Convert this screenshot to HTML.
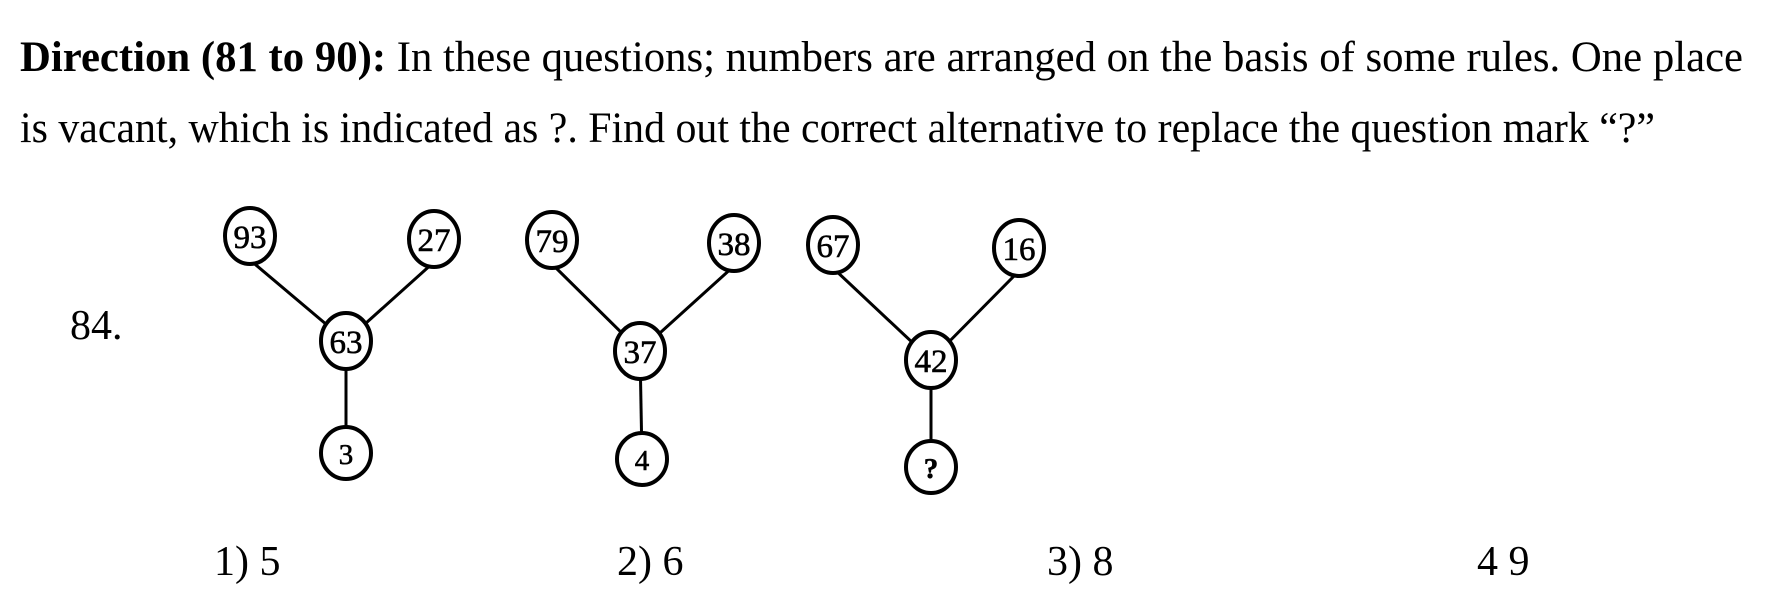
<!DOCTYPE html>
<html><head><meta charset="utf-8"><style>
body{margin:0;width:1766px;height:604px;background:#fff;position:relative;overflow:hidden;font-family:"Liberation Serif",serif;color:#000}
.l{position:absolute;left:20px;font-size:43px;line-height:1;white-space:nowrap;transform-origin:0 0}
.t{position:absolute;font-size:42px;line-height:1;white-space:nowrap}
svg{position:absolute;left:0;top:0}
</style></head><body>
<div class="l" id="l1" data-w="1723" style="top:36px"><b>Direction (81 to 90):</b> In these questions; numbers are arranged on the basis of some rules. One place</div>
<div class="l" id="l2" data-w="1635" style="top:107px">is vacant, which is indicated as ?. Find out the correct alternative to replace the question mark “?”</div>
<div class="t" style="left:70px;top:305px">84.</div>
<svg width="1766" height="604" font-family="Liberation Serif, serif" font-size="33" text-anchor="middle">
<g stroke="#000" stroke-width="3" fill="none">
<line x1="250" y1="260" x2="346" y2="341"/><line x1="434" y1="262" x2="346" y2="341"/><line x1="346" y1="341" x2="346" y2="453"/>
<line x1="552" y1="264" x2="640" y2="351"/><line x1="734" y1="266" x2="640" y2="351"/><line x1="640" y1="351" x2="642" y2="459"/>
<line x1="833" y1="268" x2="931" y2="360"/><line x1="1019" y1="271" x2="931" y2="360"/><line x1="931" y1="360" x2="931" y2="467"/>
</g>
<g stroke="#000" stroke-width="4" fill="#fff">
<ellipse cx="250" cy="236" rx="25" ry="28"/><ellipse cx="434" cy="239" rx="25" ry="28"/><ellipse cx="346" cy="341" rx="25" ry="28"/><ellipse cx="346" cy="453" rx="25" ry="26"/>
<ellipse cx="552" cy="240" rx="25" ry="28"/><ellipse cx="734" cy="243" rx="25" ry="28"/><ellipse cx="640" cy="351" rx="25" ry="28"/><ellipse cx="642" cy="459" rx="25" ry="26"/>
<ellipse cx="833" cy="245" rx="25" ry="28"/><ellipse cx="1019" cy="248" rx="25" ry="28"/><ellipse cx="931" cy="360" rx="25" ry="28"/><ellipse cx="931" cy="467" rx="25" ry="26"/>
</g>
<g fill="#000" stroke="#000" stroke-width="0.6">
<text x="250" y="248">93</text><text x="434" y="251">27</text><text x="346" y="353">63</text><text x="346" y="464" font-size="29">3</text>
<text x="552" y="252">79</text><text x="734" y="255">38</text><text x="640" y="363">37</text><text x="642" y="470" font-size="29">4</text>
<text x="833" y="257">67</text><text x="1019" y="260">16</text><text x="931" y="372">42</text><text x="931" y="478" font-size="29" font-weight="bold">?</text>
</g>
</svg>
<div class="t" style="left:214px;top:541px">1) 5</div>
<div class="t" style="left:617px;top:541px">2) 6</div>
<div class="t" style="left:1047px;top:541px">3) 8</div>
<div class="t" style="left:1477px;top:541px">4 9</div>
<script>
for(const id of ["l1","l2"]){const e=document.getElementById(id);const w=+e.dataset.w;const n=e.scrollWidth;e.style.transform="scaleX("+(w/n)+")";}
</script>
</body></html>
